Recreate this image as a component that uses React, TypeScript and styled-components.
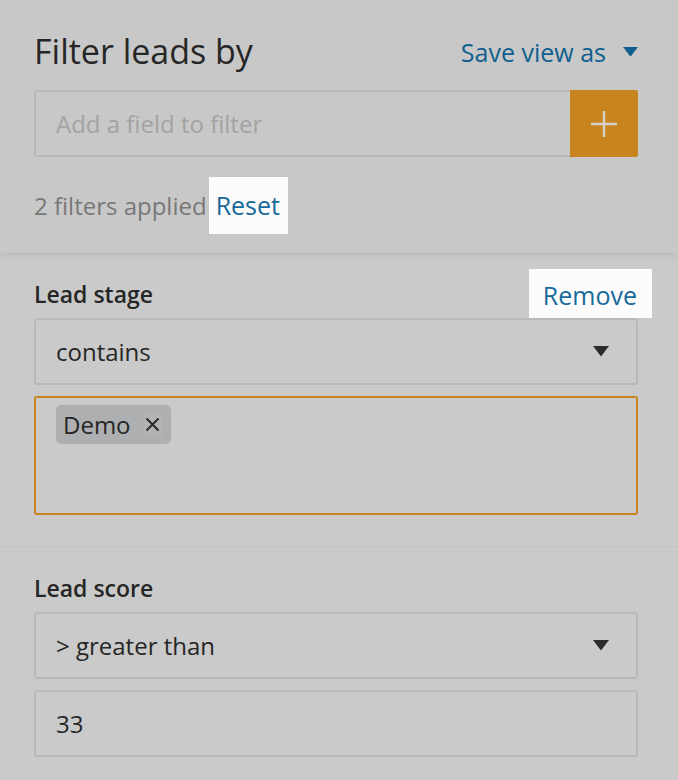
import React, { ReactElement } from 'react';
import styled, { createGlobalStyle } from 'styled-components';

const GlobalStyle = createGlobalStyle`
  html, body {
    margin: 0;
    padding: 0;
    background: #c9c9c9;
  }
  body {
    font-family: "Open Sans", Lato, "Liberation Sans", sans-serif;
    -webkit-font-smoothing: antialiased;
  }
`;

const palette = {
  text: '#262626',
  muted: '#787878',
  placeholder: '#a3a3a3',
  blue: '#10608f',
  linkBlue: '#17699a',
  orange: '#c8841f',
  border: '#b9b9b9',
  chip: '#adafb1',
};

function Caret({ color, size = 16 }: { color: string; size?: number }): ReactElement {
  return (
    <svg width={size} height={size * 0.65} viewBox="0 0 16 10.4">
      <polygon points="0,0 16,0 8,10.4" fill={color} />
    </svg>
  );
}

type FilterProps = {
  label: string;
  operator: string;
  removable?: boolean;
  children: React.ReactNode;
};

function FilterBlock({ label, operator, removable, children }: FilterProps): ReactElement {
  return (
    <FilterSection>
      <FilterHead>
        <FilterLabel>{label}</FilterLabel>
        {removable && <RemoveSpot>Remove</RemoveSpot>}
      </FilterHead>
      <SelectBox>
        <span>{operator}</span>
        <Caret color="#2b2b2b" size={16} />
      </SelectBox>
      {children}
    </FilterSection>
  );
}

function App(): ReactElement {
  return (
    <>
      <GlobalStyle />
      <Panel>
        <Header>
          <TitleRow>
            <Title>Filter leads by</Title>
            <SaveView>
              Save view as
              <Caret color={palette.blue} size={15} />
            </SaveView>
          </TitleRow>
          <FieldRow>
            <FieldInput>Add a field to filter</FieldInput>
            <AddButton aria-label="add">
              <svg width="28" height="28" viewBox="0 0 28 28">
                <path d="M14 1v26M1 14h26" stroke="#d4d0ca" strokeWidth="2.4" />
              </svg>
            </AddButton>
          </FieldRow>
          <StatusRow>
            <StatusText>2 filters applied</StatusText>
            <ResetSpot>Reset</ResetSpot>
          </StatusRow>
        </Header>

        <FilterBlock label="Lead stage" operator="contains" removable>
          <TagArea>
            <Chip>
              Demo
              <ChipClose>
                <svg width="15" height="15" viewBox="0 0 15 15">
                  <path d="M1.5 1.5l12 12M13.5 1.5l-12 12" stroke="#2a2a2a" strokeWidth="2" />
                </svg>
              </ChipClose>
            </Chip>
          </TagArea>
        </FilterBlock>

        <Divider />

        <FilterBlock label="Lead score" operator="> greater than">
          <ValueBox>33</ValueBox>
        </FilterBlock>
      </Panel>
    </>
  );
}

const Panel = styled.div`
  width: 678px;
  min-height: 780px;
  background: #cacaca;
`;

const Header = styled.div`
  background: #c8c8c8;
  padding: 29px 40px 19px 34px;
  box-shadow: 0 3px 6px rgba(0, 0, 0, 0.07);
  position: relative;
`;

const TitleRow = styled.div`
  display: flex;
  justify-content: space-between;
  align-items: center;
  height: 43px;
`;

const Title = styled.h1`
  margin: 0;
  font-size: 34px;
  line-height: 43px;
  font-weight: 400;
  color: ${palette.text};
  padding-top: 2px;
`;

const SaveView = styled.div`
  display: flex;
  align-items: center;
  gap: 17px;
  font-size: 25px;
  line-height: 32px;
  color: ${palette.blue};
  padding-top: 2px;
`;

const FieldRow = styled.div`
  display: flex;
  margin-top: 18px;
  height: 67px;
`;

const FieldInput = styled.div`
  flex: 1;
  display: flex;
  align-items: center;
  padding-left: 20px;
  border: 2px solid ${palette.border};
  border-right: none;
  border-radius: 3px 0 0 3px;
  font-size: 24px;
  color: ${palette.placeholder};
`;

const AddButton = styled.button`
  width: 68px;
  border: none;
  padding: 0;
  background: ${palette.orange};
  border-radius: 0 2px 2px 0;
  display: flex;
  align-items: center;
  justify-content: center;
`;

const StatusRow = styled.div`
  display: flex;
  align-items: center;
  margin-top: 20px;
`;

const StatusText = styled.span`
  font-size: 24px;
  color: ${palette.muted};
`;

const ResetSpot = styled.span`
  background: #fcfcfc;
  color: ${palette.linkBlue};
  font-size: 25px;
  padding: 14px 8px 15px 7px;
  line-height: 28px;
  margin-left: 2px;
`;

const FilterSection = styled.div`
  padding: 16px 40px 31px 34px;
`;

const FilterHead = styled.div`
  display: flex;
  justify-content: space-between;
  align-items: center;
  height: 49px;
`;

const FilterLabel = styled.span`
  font-size: 23px;
  font-weight: 600;
  color: ${palette.text};
`;

const RemoveSpot = styled.span`
  background: #fcfcfc;
  color: ${palette.linkBlue};
  font-size: 25px;
  height: 49px;
  display: flex;
  align-items: center;
  padding: 3px 15px 0 14px;
  box-sizing: border-box;
  margin-right: -14px;
`;

const fieldBox = `
  box-sizing: border-box;
  height: 67px;
  border: 2px solid ${palette.border};
  border-radius: 3px;
  padding: 0 27px 0 20px;
  display: flex;
  align-items: center;
  font-size: 24px;
  color: ${palette.text};
`;

const SelectBox = styled.div`
  ${fieldBox}
  justify-content: space-between;
`;

const ValueBox = styled.div`
  ${fieldBox}
  margin-top: 11px;
`;

const TagArea = styled.div`
  box-sizing: border-box;
  margin-top: 11px;
  height: 119px;
  border: 2px solid ${palette.orange};
  border-radius: 3px;
  padding: 7px 20px;
  display: flex;
  align-items: flex-start;
`;

const Chip = styled.span`
  display: inline-flex;
  align-items: center;
  gap: 12px;
  height: 39px;
  padding: 0 9px 0 7px;
  background: ${palette.chip};
  border-radius: 5px;
  font-size: 24px;
  color: ${palette.text};
`;

const ChipClose = styled.span`
  display: flex;
  align-items: center;
  justify-content: center;
  width: 19px;
  height: 24px;
  background: #b3b3b3;
`;

const Divider = styled.hr`
  margin: 0;
  border: none;
  height: 1px;
  background: #c2c2c2;
`;

export default App;
